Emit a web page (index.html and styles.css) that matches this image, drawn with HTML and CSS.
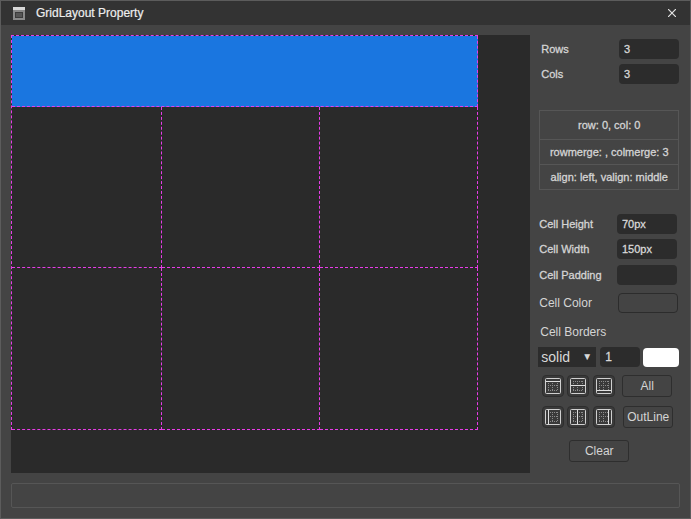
FILE: index.html
```html
<!doctype html>
<html>
  <head>
    <title>GridLayout Property</title>
    <meta charset="utf-8" />
    <link rel="stylesheet" href="styles.css">
  </head>
  <body>
    <div id="dialog">
      <div id="titlebar">
        <svg class="title-icon" width="12" height="13" viewBox="0 0 12 13">
          <rect width="12" height="13" fill="#8a8a8a" />
          <rect width="12" height="3" fill="#d8d8d8" />
          <rect x="2.5" y="5.5" width="7" height="5" fill="#555" stroke="#3c3c3c" />
        </svg>
        <span class="title-text">GridLayout Property</span>
        <svg class="close-icon" width="8" height="8" viewBox="0 0 8 8">
          <path d="M0 0l8 8M8 0l-8 8" stroke="#e4e4e4" stroke-width="1.2" fill="none" />
        </svg>
      </div>
      <div id="main">
        <div id="canvas">
          <div id="grid">
            <div class="cell selected"></div>
            <div class="cell"></div>
            <div class="cell"></div>
            <div class="cell"></div>
            <div class="cell"></div>
            <div class="cell"></div>
            <div class="cell"></div>
          </div>
        </div>
        <div id="panel">
          <div class="size-form">
            <label class="row">Rows <input class="field" value="3" /></label>
            <label class="row">Cols <input class="field" value="3" /></label>
          </div>
          <div class="info">
            <div class="info-row first">row: 0, col: 0</div>
            <div class="info-row">rowmerge: , colmerge: 3</div>
            <div class="info-row">align: left, valign: middle</div>
          </div>
          <div class="cell-form">
            <label class="row">Cell Height <input class="field" value="70px" /></label>
            <label class="row">Cell Width <input class="field" value="150px" /></label>
            <label class="row padding-row">Cell Padding <input class="field" value="" /></label>
            <label class="row color-row">Cell Color <span class="swatch"></span></label>
          </div>
          <div class="borders-title">Cell Borders</div>
          <div class="border-style">
            <div class="select">solid <span class="arrow">&#9660;</span></div>
            <input class="field width-field" value="1" />
            <span class="white-swatch"></span>
          </div>
          <div class="btn-row">
            <button class="icon-btn">
              <svg width="16" height="16" viewBox="0 0 16 16">
                <use href="#cell-base" />
                <path d="M1 3.5h14" class="solid" />
              </svg>
            </button>
            <button class="icon-btn">
              <svg width="16" height="16" viewBox="0 0 16 16">
                <use href="#cell-base" />
                <path d="M1 7.5h14" class="solid" />
              </svg>
            </button>
            <button class="icon-btn">
              <svg width="16" height="16" viewBox="0 0 16 16">
                <use href="#cell-base" />
                <path d="M1 12.5h14" class="solid" />
              </svg>
            </button>
            <button class="text-btn all-btn">All</button>
          </div>
          <div class="btn-row second">
            <button class="icon-btn">
              <svg width="16" height="16" viewBox="0 0 16 16">
                <use href="#cell-base" />
                <path d="M3.5 1v14" class="solid" />
              </svg>
            </button>
            <button class="icon-btn">
              <svg width="16" height="16" viewBox="0 0 16 16">
                <use href="#cell-base" />
                <path d="M7.5 1v14" class="solid" />
              </svg>
            </button>
            <button class="icon-btn">
              <svg width="16" height="16" viewBox="0 0 16 16">
                <use href="#cell-base" />
                <path d="M12.5 1v14" class="solid" />
              </svg>
            </button>
            <button class="text-btn outline-btn">OutLine</button>
          </div>
          <button class="text-btn clear-btn">Clear</button>
        </div>
      </div>
      <div id="footer"></div>
    </div>
    <svg width="0" height="0" class="defs">
      <g id="cell-base">
        <rect x=".5" y=".5" width="15" height="15" rx="1" fill="none" stroke="#d0d0d0" />
        <path d="M3.5 3v10M7.5 3v10M12.5 3v10M3 3.5h10M3 7.5h10M3 12.5h10" fill="none" stroke="#8c8c8c" stroke-dasharray="1 1" />
      </g>
    </svg>
  </body>
</html>
```

FILE: styles.css
```css
* {
  box-sizing: border-box;
}

body {
  margin: 0;
  background: #444;
  font-family: "Liberation Sans", Arial, sans-serif;
  font-size: 11px;
  color: #d4d4d4;
}

#dialog {
  width: 691px;
  height: 519px;
  border: 1px solid #5c5c5c;
  background: #444;
  display: flex;
  flex-direction: column;
  overflow: hidden;
}

#titlebar {
  height: 24px;
  background: #333;
  display: flex;
  align-items: center;
  padding: 0 14px 0 12px;
}

.title-text {
  margin-left: 11px;
  font-size: 12px;
  color: #eee;
  -webkit-text-stroke: 0.2px #eee;
}

.close-icon {
  margin-left: auto;
}

#main {
  display: flex;
  padding: 10px 0 0 10px;
}

#canvas {
  width: 520px;
  height: 438px;
  background: #2a2a2a;
}

#grid {
  width: 467px;
  display: grid;
  grid-template-columns: 150px 158px 158px;
  grid-template-rows: 71px 161px 162px;
  border-left: 1px dashed #e83ce8;
  border-top: 1px dashed #e83ce8;
}

.cell {
  border-right: 1px dashed #e83ce8;
  border-bottom: 1px dashed #e83ce8;
}

.selected {
  grid-column: span 3;
  background: #1a76e0;
}

#panel {
  width: 160px;
}

.row {
  display: flex;
  align-items: center;
  justify-content: space-between;
  height: 20px;
  -webkit-text-stroke: 0.3px #d4d4d4;
}

.field {
  width: 60px;
  height: 20px;
  border: none;
  border-radius: 4px;
  background: #2c2c2c;
  color: #d8d8d8;
  font-family: inherit;
  font-size: 11px;
  padding: 0 5px;
  outline: none;
  -webkit-text-stroke: 0.3px #d8d8d8;
}

.size-form {
  padding: 4px 11px 0 11px;
  display: flex;
  flex-direction: column;
  gap: 5px;
}

.info {
  margin: 26px 0 0 9px;
  width: 140px;
  height: 80px;
  border: 1px solid #565656;
  text-align: center;
  -webkit-text-stroke: 0.3px #d4d4d4;
}

.info-row {
  height: 25px;
  line-height: 24px;
  border-top: 1px solid #565656;
}

.info-row.first {
  height: 28px;
  line-height: 28px;
  border-top: none;
}

.cell-form {
  margin-top: 24px;
  padding: 0 13px 0 9px;
  display: flex;
  flex-direction: column;
  gap: 5px;
}

.padding-row {
  margin-top: 1px;
}

.color-row {
  margin-top: 3px;
  font-size: 12px;
  -webkit-text-stroke: 0;
}

.swatch {
  width: 60px;
  height: 20px;
  margin-right: -1px;
  border: 1px solid #2c2c2c;
  border-radius: 4px;
  background: #444;
}

.borders-title {
  margin: 12px 0 0 10px;
  height: 15px;
  font-size: 12px;
}

.border-style {
  margin: 7px 0 0 8px;
  display: flex;
  align-items: center;
}

.select {
  width: 58px;
  height: 20px;
  background: #2c2c2c;
  font-size: 14px;
  line-height: 20px;
  padding-left: 3px;
  color: #d8d8d8;
  display: flex;
  justify-content: space-between;
  align-items: center;
}

.arrow {
  font-size: 10px;
  margin-right: 4px;
}

.width-field {
  width: 40px;
  margin-left: 4px;
  font-size: 12px;
}

.white-swatch {
  width: 36px;
  height: 19px;
  margin-left: 3px;
  background: #fff;
  border-radius: 4px;
}

.btn-row {
  margin: 8px 0 0 12px;
  display: flex;
  gap: 3px;
}

.btn-row.second {
  margin-top: 9px;
}

button {
  font-family: inherit;
  color: #d4d4d4;
  padding: 0;
}

.icon-btn {
  width: 22px;
  height: 22px;
  background: #3a3a3a;
  border: 1px solid #2e2e2e;
  border-radius: 4px;
  display: flex;
  align-items: center;
  justify-content: center;
}

.icon-btn:nth-child(3) {
  margin-left: 1px;
}

.solid {
  fill: none;
  stroke: #e0e0e0;
}

.text-btn {
  height: 22px;
  background: #444;
  border: 1px solid #2e2e2e;
  border-radius: 3px;
  font-size: 12px;
}

.all-btn {
  width: 50px;
  margin-left: 4px;
}

.outline-btn {
  width: 50px;
  margin-left: 5px;
}

.clear-btn {
  display: block;
  width: 60px;
  margin: 12px 0 0 39px;
}

#footer {
  margin: 10px 0 0 10px;
  width: 669px;
  height: 25px;
  border: 1px solid #565656;
  border-radius: 2px;
}

.defs {
  position: absolute;
}
```
